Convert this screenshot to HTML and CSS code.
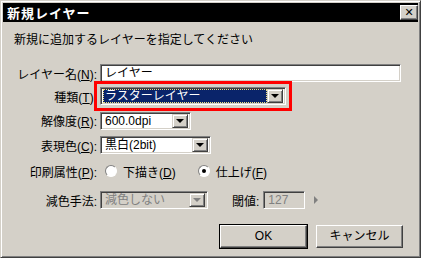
FILE: index.html
```html
<!DOCTYPE html>
<html lang="ja">
<head>
  <meta charset="UTF-8">
  <title>新規レイヤー</title>
  <link rel="stylesheet" href="styles.css">
</head>
<body>
  <div class="window">
    <div class="titlebar">
      <span class="title">新規レイヤー</span>
      <span class="close">✕</span>
    </div>

    <p class="lead">新規に追加するレイヤーを指定してください</p>

    <div class="form">
      <label class="lbl">レイヤー名(<u>N</u>):</label>
      <div class="ctl"><div class="field wide">レイヤー</div></div>

      <label class="lbl">種類(<u>T</u>):</label>
      <div class="ctl">
        <div class="combo kind marked">
          <span class="value selected">ラスターレイヤー</span>
          <span class="drop"><i></i></span>
        </div>
      </div>

      <label class="lbl">解像度(<u>R</u>):</label>
      <div class="ctl">
        <div class="combo dpi">
          <span class="value">600.0dpi</span>
          <span class="drop"><i></i></span>
        </div>
      </div>

      <label class="lbl">表現色(<u>C</u>):</label>
      <div class="ctl">
        <div class="combo color">
          <span class="value">黒白(2bit)</span>
          <span class="drop"><i></i></span>
        </div>
      </div>

      <label class="lbl">印刷属性(<u>P</u>):</label>
      <div class="ctl radios">
        <span class="radio"><span class="dot"></span><span>下描き(<u>D</u>)</span></span>
        <span class="radio"><span class="dot on"></span><span>仕上げ(<u>F</u>)</span></span>
      </div>

      <label class="lbl">減色手法:</label>
      <div class="ctl">
        <div class="combo reduce disabled">
          <span class="value">減色しない</span>
          <span class="drop"><i></i></span>
        </div>
        <span class="sub">閾値:</span>
        <div class="field small disabled">127</div>
        <span class="arrow"></span>
      </div>
    </div>

    <div class="buttons">
      <span class="btn default">OK</span>
      <span class="btn">キャンセル</span>
    </div>
  </div>
</body>
</html>
```

FILE: styles.css
```css
/* ダイアログ全体 */
body {
  margin: 0;
  font-family: "Liberation Sans", "Noto Sans CJK JP", sans-serif;
  font-size: 12px;
  color: #000;
  background: #d4d0c8;
}
u {
  text-decoration: underline;
}
.window {
  width: 421px;
  height: 258px;
  box-sizing: border-box;
  background: #d4d0c8;
  border: 1px solid;
  border-color: #d4d0c8 #404040 #404040 #d4d0c8;
  box-shadow: inset 1px 1px 0 #fff, inset -1px -1px 0 #808080;
  padding: 2px;
}
.titlebar {
  height: 19px;
  background: #000;
  display: flex;
  align-items: center;
  justify-content: space-between;
  padding: 0 0 0 4px;
}
.title {
  color: #fff;
  font-weight: bold;
  font-size: 13px;
  letter-spacing: 1px;
}
.close {
  width: 18px;
  height: 15px;
  box-sizing: border-box;
  background: #d4d0c8;
  border: 1px solid;
  border-color: #fff #404040 #404040 #fff;
  box-shadow: inset -1px -1px 0 #808080;
  font-family: "DejaVu Sans", sans-serif;
  font-size: 11px;
  font-weight: bold;
  line-height: 13px;
  text-align: center;
}
.lead {
  margin: 10px 0 0 11px;
  line-height: 16px;
}

/* 入力欄のグリッド */
.form {
  display: grid;
  grid-template-columns: 88px 1fr;
  grid-template-rows: 22px 24px 25px 24px 28px 30px;
  column-gap: 3px;
  margin: 14px 0 0 6px;
  align-items: center;
}
.lbl {
  text-align: right;
  white-space: nowrap;
}
.ctl {
  display: flex;
  align-items: center;
}
.field, .combo {
  height: 18px;
  box-sizing: border-box;
  background: #fff;
  border: 1px solid;
  border-color: #808080 #fff #fff #808080;
  box-shadow: inset 1px 1px 0 #404040, inset -1px -1px 0 #d4d0c8;
}
.field {
  padding: 1px 4px;
  line-height: 14px;
}
.wide {
  width: 301px;
}
.small {
  width: 42px;
}
.combo {
  display: flex;
  align-items: center;
  padding: 2px;
}
.value {
  flex: 1;
  height: 14px;
  line-height: 14px;
  padding: 0 2px;
  white-space: nowrap;
}
.selected {
  background: #0a246a;
  color: #fff;
  outline: 1px dotted #f0e080;
  outline-offset: -1px;
}
.drop {
  width: 16px;
  height: 14px;
  box-sizing: border-box;
  background: #d4d0c8;
  border: 1px solid;
  border-color: #d4d0c8 #404040 #404040 #d4d0c8;
  box-shadow: inset 1px 1px 0 #fff, inset -1px -1px 0 #808080;
  display: flex;
  align-items: center;
  justify-content: center;
}
.drop i {
  border-left: 4px solid transparent;
  border-right: 4px solid transparent;
  border-top: 4px solid #000;
}
.kind {
  width: 186px;
}
.marked {
  outline: 3px solid #f00;
  outline-offset: 3px;
}
.dpi {
  width: 91px;
}
.color {
  width: 111px;
}
.reduce {
  width: 108px;
}
.disabled {
  background: #d4d0c8;
  color: #808080;
}
.disabled .drop i {
  border-top-color: #808080;
}
.sub {
  margin: 0 4px 0 24px;
}
.arrow {
  margin-left: 9px;
  border-top: 4px solid transparent;
  border-bottom: 4px solid transparent;
  border-left: 4px solid #808080;
}

/* ラジオボタン */
.radios {
  gap: 22px;
  padding-left: 5px;
}
.radio {
  display: flex;
  align-items: center;
  gap: 6px;
}
.dot {
  width: 12px;
  height: 12px;
  box-sizing: border-box;
  border-radius: 50%;
  background: #fff;
  border: 1px solid;
  border-color: #808080 #fff #fff #808080;
  position: relative;
}
.dot.on::after {
  content: "";
  position: absolute;
  left: 3px;
  top: 3px;
  width: 4px;
  height: 4px;
  border-radius: 50%;
  background: #000;
}

/* ボタン */
.buttons {
  display: flex;
  justify-content: flex-end;
  gap: 9px;
  margin: 10px 15px 0 0;
}
.btn {
  width: 87px;
  height: 23px;
  box-sizing: border-box;
  background: #d4d0c8;
  border: 1px solid;
  border-color: #fff #404040 #404040 #fff;
  box-shadow: inset -1px -1px 0 #808080;
  text-align: center;
  line-height: 20px;
}
.default {
  outline: 1px solid #000;
}
```
